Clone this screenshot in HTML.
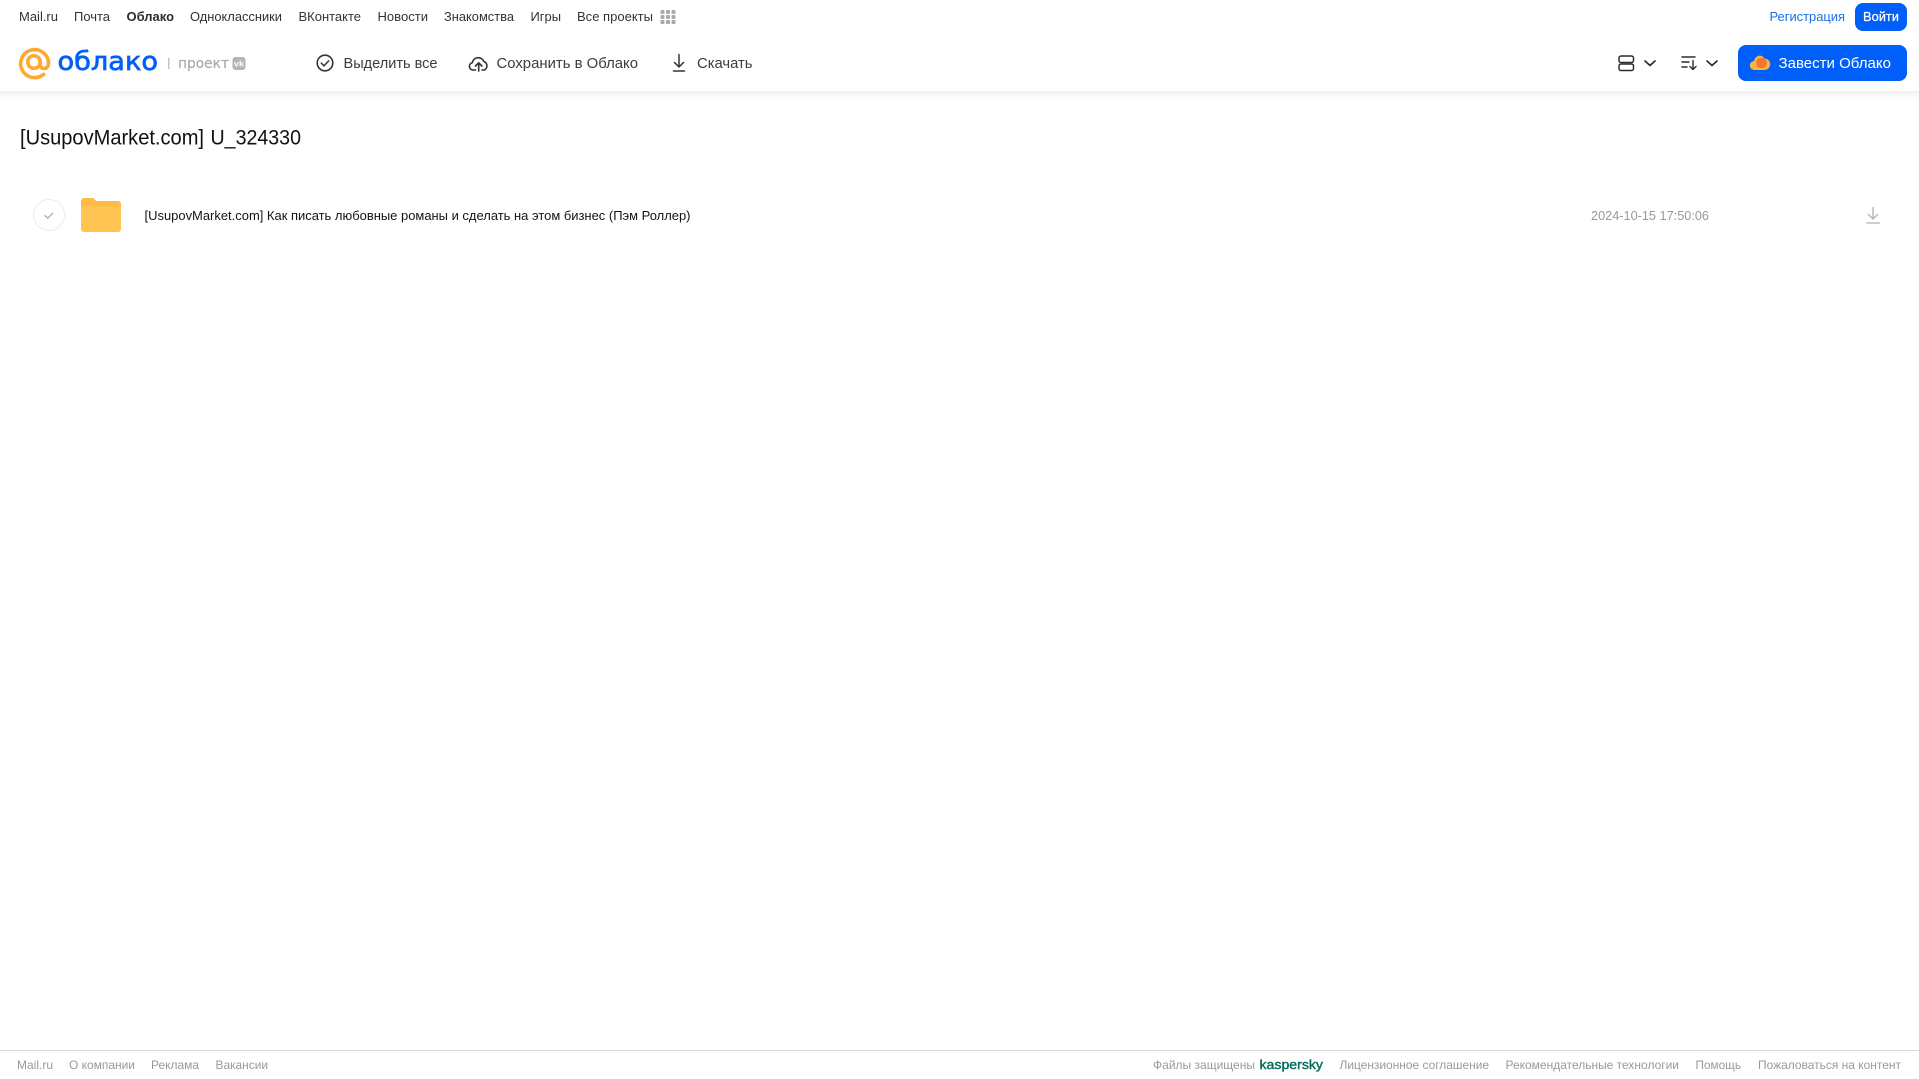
<!DOCTYPE html>
<html lang="ru">
<head>
<meta charset="utf-8">
<title>[UsupovMarket.com] U_324330</title>
<style>
html,body{margin:0;padding:0;background:#fff;width:1919px;height:1079px;overflow:hidden}
svg{display:block;position:absolute;left:0;top:0}
text{font-family:"Liberation Sans",sans-serif;white-space:pre}
.n{font-size:13px;fill:#333}
.a{font-size:15px;fill:#3c3c3c}
.f{font-size:12px;fill:#999}
</style>
</head>
<body>
<svg width="1919" height="1079" viewBox="0 0 1919 1079" xmlns="http://www.w3.org/2000/svg">
<defs>
<linearGradient id="sh" x1="0" y1="0" x2="0" y2="1">
<stop offset="0" stop-color="#f1f1f1"/>
<stop offset="1" stop-color="#fff"/>
</linearGradient>
</defs>
<rect x="0" y="91" width="1919" height="9" fill="url(#sh)"/>

<!-- top nav -->
<text class="n" x="19" y="21" textLength="39" lengthAdjust="spacingAndGlyphs">Mail.ru</text>
<text class="n" x="74" y="21" textLength="36" lengthAdjust="spacingAndGlyphs">Почта</text>
<text class="n" x="126.500" y="21" textLength="47.500" lengthAdjust="spacingAndGlyphs" font-weight="700" style="fill:#2c2d2e">Облако</text>
<text class="n" x="190" y="21" textLength="92" lengthAdjust="spacingAndGlyphs">Одноклассники</text>
<text class="n" x="298.500" y="21" textLength="62.500" lengthAdjust="spacingAndGlyphs">ВКонтакте</text>
<text class="n" x="377.500" y="21" textLength="50.500" lengthAdjust="spacingAndGlyphs">Новости</text>
<text class="n" x="444" y="21" textLength="70" lengthAdjust="spacingAndGlyphs">Знакомства</text>
<text class="n" x="530.500" y="21" textLength="30.500" lengthAdjust="spacingAndGlyphs">Игры</text>
<text class="n" x="577" y="21" textLength="76" lengthAdjust="spacingAndGlyphs">Все проекты</text>
<g fill="#aaa">
<rect x="660.500" y="10" width="4" height="4" rx="1"/><rect x="666" y="10" width="4" height="4" rx="1"/><rect x="671.500" y="10" width="4" height="4" rx="1"/>
<rect x="660.500" y="15" width="4" height="4" rx="1"/><rect x="666" y="15" width="4" height="4" rx="1"/><rect x="671.500" y="15" width="4" height="4" rx="1"/>
<rect x="660.500" y="20" width="4" height="4" rx="1"/><rect x="666" y="20" width="4" height="4" rx="1"/><rect x="671.500" y="20" width="4" height="4" rx="1"/>
</g>

<text x="1769.500" y="21" font-size="13" fill="#1a6fe8" textLength="75.500" lengthAdjust="spacingAndGlyphs">Регистрация</text>
<rect x="1855" y="3" width="52" height="28" rx="8" fill="#005ff9"/>
<text x="1863" y="21" font-size="13" fill="#fff" stroke="#fff" stroke-width=".25" textLength="36" lengthAdjust="spacingAndGlyphs">Войти</text>

<!-- logo -->
<path d="M43.600 74.400A14 14 0 1 1 48.600 62.500c0 3.600-1.900 6-4.600 6-2.400 0-4-1.800-4-4.400V62.300" fill="none" stroke="#ffa930" stroke-width="3.600" stroke-linecap="round"/>
<circle cx="34" cy="62" r="6.300" fill="none" stroke="#ffa930" stroke-width="3.500"/>
<text x="57.500" y="70" font-size="26" style="font-family:'DejaVu Sans',sans-serif" font-weight="400" fill="#005ff9" stroke="#005ff9" stroke-width=".7" textLength="100.500" lengthAdjust="spacingAndGlyphs">облако</text>
<rect x="168" y="58" width="1.400" height="11" fill="#c2c2c2"/>
<text x="178" y="68" font-size="14" style="font-family:'DejaVu Sans',sans-serif" fill="#adadad" stroke="#adadad" stroke-width=".25" textLength="51" lengthAdjust="spacingAndGlyphs">проект</text>
<rect x="232.500" y="57" width="13" height="13" rx="3" fill="#b4b4b4"/>
<text x="234" y="66.500" font-size="8" font-weight="700" fill="#fff" textLength="10" lengthAdjust="spacingAndGlyphs">vk</text>

<!-- actions -->
<circle cx="325" cy="63" r="7.800" fill="none" stroke="#333" stroke-width="1.600"/>
<path d="M321.300 63.200l2.700 2.700 4.700-5" fill="none" stroke="#333" stroke-width="1.500" stroke-linecap="round" stroke-linejoin="round"/>
<text class="a" x="343.500" y="68" textLength="94" lengthAdjust="spacingAndGlyphs">Выделить все</text>

<path d="M475.500 70h-2.500a3.700 3.700 0 0 1-.7-7.300 6 6 0 0 1 11.500-1.200 4.600 4.600 0 0 1 .5 8.500h-2.300" fill="none" stroke="#333" stroke-width="1.600" stroke-linecap="round" stroke-linejoin="round"/>
<path d="M478.700 71V63M475.500 66l3.200-3.200 3.200 3.200" fill="none" stroke="#333" stroke-width="1.600" stroke-linecap="round" stroke-linejoin="round"/>
<text class="a" x="496.500" y="68" textLength="141.500" lengthAdjust="spacingAndGlyphs">Сохранить в Облако</text>

<path d="M679 54.500V67M674.500 62.500l4.500 4.500 4.500-4.500M673.500 71h11" fill="none" stroke="#333" stroke-width="1.500" stroke-linecap="round" stroke-linejoin="round"/>
<text class="a" x="697" y="68" textLength="55.500" lengthAdjust="spacingAndGlyphs">Скачать</text>

<!-- right controls -->
<rect x="1619" y="56" width="14.500" height="6.500" rx="2" fill="none" stroke="#2c2d2e" stroke-width="1.500"/>
<rect x="1619" y="64" width="14.500" height="6.500" rx="2" fill="none" stroke="#2c2d2e" stroke-width="1.500"/>
<path d="M1645 61l5 4.500 5-4.500" fill="none" stroke="#2c2d2e" stroke-width="1.700" stroke-linecap="round" stroke-linejoin="round"/>
<path d="M1682 57h13M1682 62h7M1682 67h5" fill="none" stroke="#2c2d2e" stroke-width="1.400" stroke-linecap="round"/>
<path d="M1693 60.500V69.500M1690 66.500l3 3 3-3" fill="none" stroke="#2c2d2e" stroke-width="1.400" stroke-linecap="round" stroke-linejoin="round"/>
<path d="M1707 61l5 4.500 5-4.500" fill="none" stroke="#2c2d2e" stroke-width="1.700" stroke-linecap="round" stroke-linejoin="round"/>

<rect x="1738" y="45" width="169" height="36" rx="8" fill="#005ff9"/>
<path d="M1754.500 70a4.500 4.500 0 0 1-.3-9 5.500 5.500 0 0 1 10.300-2.500 5.800 5.800 0 0 1 1 11.500z" fill="#ffb23f"/>
<circle cx="1761.500" cy="63" r="5.300" fill="#f5762c"/>
<text x="1778.500" y="68" font-size="15" fill="#fff" textLength="112.500" lengthAdjust="spacingAndGlyphs">Завести Облако</text>

<!-- title -->
<text x="20" y="144.500" font-size="21" fill="#111" textLength="184" lengthAdjust="spacingAndGlyphs">[UsupovMarket.com]</text>
<text x="210.500" y="144.500" font-size="21" fill="#111" textLength="90.500" lengthAdjust="spacingAndGlyphs">U_324330</text>

<!-- row -->
<circle cx="49" cy="215" r="15.500" fill="#fff" stroke="#ececec" stroke-width="1"/>
<path d="M45 215.500l2.800 2.700 5-5" fill="none" stroke="#a8a8a8" stroke-width="1.300" stroke-linecap="round" stroke-linejoin="round"/>
<path d="M81 201a3 3 0 0 1 3-3h8c1.500 0 2.300.6 3 1.700l1 1.300h22a3 3 0 0 1 3 3V210H81z" fill="#ffbb45"/>
<path d="M81 206.500h40V229a3 3 0 0 1-3 3H84a3 3 0 0 1-3-3z" fill="#ffc452"/>
<text x="144.500" y="220" font-size="12.500" fill="#1c1018" textLength="546" lengthAdjust="spacingAndGlyphs">[UsupovMarket.com] Как писать любовные романы и сделать на этом бизнес (Пэм Роллер)</text>
<text x="1591" y="220" font-size="12.500" fill="#999" textLength="118" lengthAdjust="spacingAndGlyphs">2024-10-15 17:50:06</text>
<path d="M1873 207.500V219M1868.500 214.500l4.500 4.500 4.500-4.500M1867 223h12.500" fill="none" stroke="#b0b0b0" stroke-width="1.300" stroke-linecap="round" stroke-linejoin="round"/>

<!-- footer -->
<rect x="0" y="1050" width="1919" height="1" fill="#d8d8d8"/>
<text class="f" x="17" y="1069" textLength="36" lengthAdjust="spacingAndGlyphs">Mail.ru</text>
<text class="f" x="69" y="1069" textLength="66" lengthAdjust="spacingAndGlyphs">О компании</text>
<text class="f" x="151" y="1069" textLength="48" lengthAdjust="spacingAndGlyphs">Реклама</text>
<text class="f" x="215.500" y="1069" textLength="52.500" lengthAdjust="spacingAndGlyphs">Вакансии</text>
<text class="f" x="1153" y="1069" textLength="102" lengthAdjust="spacingAndGlyphs">Файлы защищены</text>
<text x="1259.500" y="1069" font-size="13" fill="#006d5c" stroke="#006d5c" stroke-width=".4" textLength="63.500" lengthAdjust="spacingAndGlyphs">kaspersky</text>
<text class="f" x="1339.500" y="1069" textLength="149.500" lengthAdjust="spacingAndGlyphs">Лицензионное соглашение</text>
<text class="f" x="1505.500" y="1069" textLength="173.500" lengthAdjust="spacingAndGlyphs">Рекомендательные технологии</text>
<text class="f" x="1695.500" y="1069" textLength="45.500" lengthAdjust="spacingAndGlyphs">Помощь</text>
<text class="f" x="1758" y="1069" textLength="143" lengthAdjust="spacingAndGlyphs">Пожаловаться на контент</text>
</svg>
</body>
</html>
